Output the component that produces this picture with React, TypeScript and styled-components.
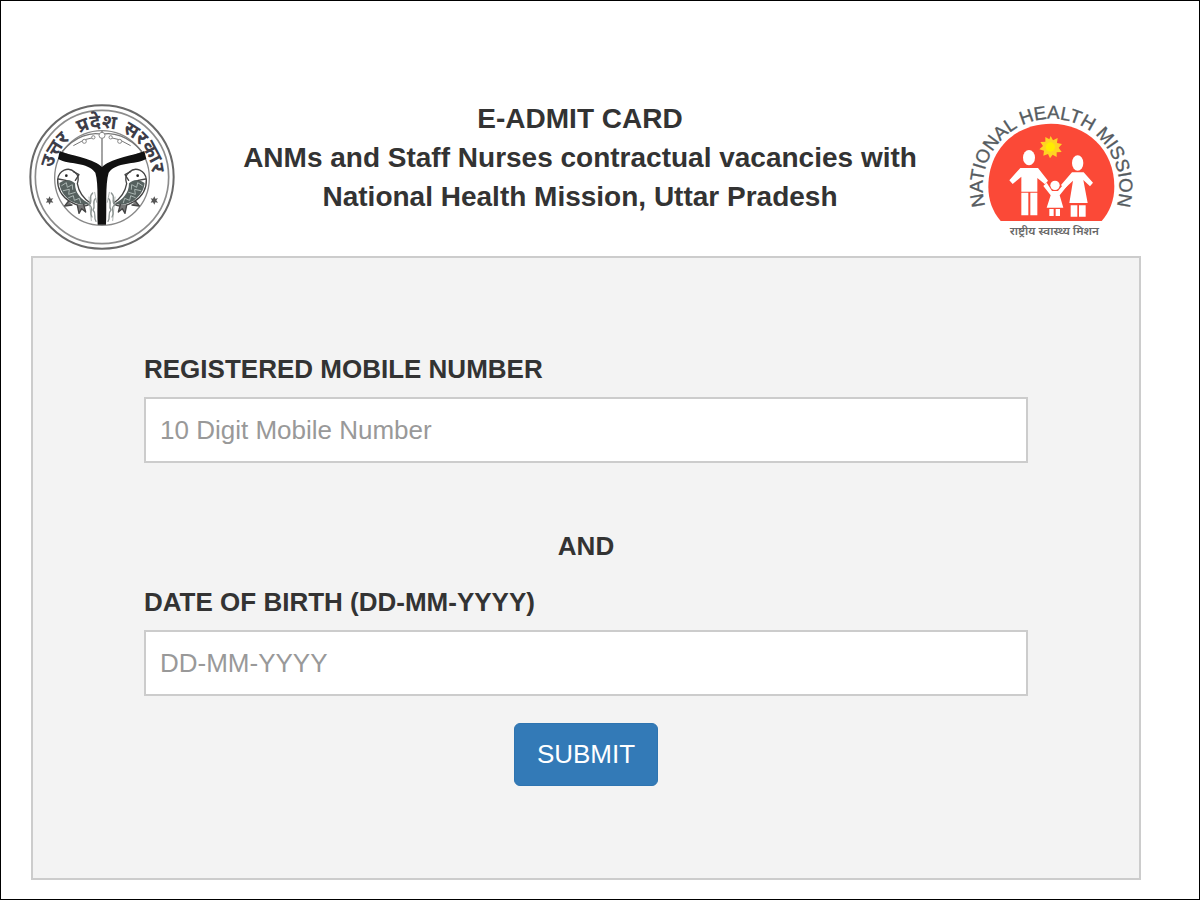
import React from "react";
import styled, { createGlobalStyle } from "styled-components";

const GlobalStyle = createGlobalStyle`
  *, *::before, *::after { box-sizing: border-box; }
  body {
    margin: 0;
    background: #fff;
    color: #333;
    font-family: "Liberation Sans", Arial, sans-serif;
  }
`;

const Page = styled.main`
  min-height: 100vh;
  padding: 98px 58px 18px 28px;
  border: 1px solid #000;
`;

const Header = styled.header`
  display: grid;
  grid-template-columns: 170px 1fr 180px;
  align-items: start;
  min-height: 157px;
`;

const Title = styled.h1`
  margin: 0;
  font-size: 28px;
  line-height: 39px;
  font-weight: 700;
  text-align: center;
`;

const TitleLine = styled.span`
  display: block;
`;

const Logo = styled.svg`
  display: block;
  margin-top: 5px;
  overflow: visible;
`;

const Panel = styled.form`
  display: flex;
  flex-direction: column;
  min-height: 624px;
  margin-left: 2px;
  padding: 91px 111px 90px;
  border: 2px solid #ccc;
  background: #f3f3f3;
`;

const Field = styled.div`
  display: flex;
  flex-direction: column;
  gap: 8px;
`;

const Label = styled.label`
  font-size: 26px;
  line-height: 40px;
  font-weight: 700;
`;

const TextInput = styled.input`
  width: 100%;
  height: 66px;
  padding: 0 14px;
  border: 2px solid #ccc;
  border-radius: 0;
  background: #fff;
  color: #555;
  font: 26px "Liberation Sans", Arial, sans-serif;

  &::placeholder {
    color: #999;
    opacity: 1;
  }
`;

const Conjunction = styled.p`
  margin: 63px 0 16px;
  font-size: 26px;
  line-height: 40px;
  font-weight: 700;
  text-align: center;
`;

const SubmitButton = styled.button`
  align-self: center;
  height: 63px;
  margin-top: 27px;
  padding: 0 22px;
  border: 1px solid #2e74b0;
  border-radius: 6px;
  background: #337ab7;
  color: #fff;
  font: 26px "Liberation Sans", Arial, sans-serif;
  cursor: pointer;
`;

const devanagari = '"Noto Sans Devanagari", "Lohit Devanagari", FreeSans, "Noto Sans", sans-serif';

function Fish() {
  return (
    <g strokeLinejoin="round" strokeLinecap="round">
      <path d="M113 252 C116 224 145 212 164 229 C178 240 176 253 172 264 C177 293 190 308 211 322 C198 337 173 332 150 318 C124 301 112 277 113 252Z" fill="#fff" stroke="#444" strokeWidth="4" />
      <path d="M118 262 C137 248 153 251 165 263 C165 294 184 311 207 323 C190 333 168 324 151 315 C131 301 120 282 118 262Z" fill="#56615f" />
      <path d="M125 270 l14-9 l3 14 l15-8 l1 14 M130 285 l18-4 l-2 15 l20-6 M146 306 l14-6 l3 14 l15-6 l4 13" fill="none" stroke="#aab5b2" strokeWidth="3" />
      <circle cx="139" cy="240" r="4" fill="#222" />
      <path d="M160 228 l17 9 l-11 17 M115 250 l23 4" fill="none" stroke="#444" strokeWidth="4" />
      <path d="M146 316 l-12 15 l22-3 M172 329 l5 24 l8-14 l12 10 l-6-23" fill="#777" stroke="#444" strokeWidth="4" />
    </g>
  );
}

function Reeds() {
  return (
    <g fill="none" stroke="#8a9290" strokeWidth="4" strokeLinecap="round">
      <path d="M218 292 C202 307 222 313 207 328 C225 337 205 347 216 364" />
      <path d="M226 309 C214 322 229 331 219 343 C231 354 219 365 228 377" />
      <path d="M207 304 L214 375 M224 290 L230 320" strokeWidth="2" />
    </g>
  );
}

function StateEmblem() {
  return (
    <Logo width="146" height="146" viewBox="27 25 438 438" role="img" aria-label="उत्तर प्रदेश सरकार">
      <defs>
        <path id="emblem-arc" d="M96 247 A150 150 0 0 1 396 247" />
      </defs>
      <circle cx="246" cy="244" r="215" fill="#fff" stroke="#686868" strokeWidth="6" />
      <circle cx="246" cy="244" r="200" fill="none" stroke="#8c8c8c" strokeWidth="5" />
      <circle cx="246" cy="247" r="142" fill="#fff" stroke="#888" strokeWidth="4" />
      <text fontFamily={devanagari} fontSize="58" fontWeight="700" fill="#3d3d48" textAnchor="middle">
        <textPath href="#emblem-arc" startOffset="17%">उत्तर</textPath>
      </text>
      <text fontFamily={devanagari} fontSize="58" fontWeight="700" fill="#3d3d48" textAnchor="middle">
        <textPath href="#emblem-arc" startOffset="47%">प्रदेश</textPath>
      </text>
      <text fontFamily={devanagari} fontSize="58" fontWeight="700" fill="#3d3d48" textAnchor="middle">
        <textPath href="#emblem-arc" startOffset="80%">सरकार</textPath>
      </text>
      <g fill="none" stroke="#777" strokeWidth="4">
        <path d="M126 168 C166 121 213 108 246 116 C279 108 326 121 366 168" />
        <path d="M128 172 L238 210 M364 172 L254 210 M246 106 V212" />
        <path d="M160 150 L194 132 L220 126 M332 150 L298 132 L272 126" strokeWidth="3" />
      </g>
      <g fill="#fff" stroke="#888" strokeWidth="3">
        <circle cx="246" cy="119" r="9" />
        <circle cx="220" cy="125" r="5" />
        <circle cx="272" cy="125" r="5" />
        <circle cx="193" cy="137" r="6" />
        <circle cx="299" cy="137" r="6" />
      </g>
      <Fish />
      <g transform="translate(492 0) scale(-1 1)"><Fish /></g>
      <Reeds />
      <g transform="translate(492 0) scale(-1 1)"><Reeds /></g>
      <path d="M119 166 C153 181 207 183 246 213 C285 183 339 181 373 166 L379 190 C342 209 291 197 266 231 C255 267 261 333 258 387 L233 387 C230 333 237 267 226 231 C201 197 150 209 114 190Z" fill="#111" />
      <g fill="#555">
        <path d="M89 302 l3 7 8-1 -5 6 5 7 -8-1 -3 7 -4-7 -7 1 4-7 -4-6 7 1Z" />
        <path d="M403 302 l3 7 8-1 -5 6 5 7 -8-1 -3 7 -4-7 -7 1 4-7 -4-6 7 1Z" />
      </g>
    </Logo>
  );
}

function HealthMissionLogo() {
  return (
    <Logo width="180" height="143" viewBox="0 27 540 429" role="img" aria-label="National Health Mission">
      <defs>
        <path id="mission-arc" d="M92 378 A205 205 0 1 1 448 378" />
      </defs>
      <text fontFamily="Liberation Sans, Arial, sans-serif" fontSize="56" fill="#555b60" stroke="#555b60" strokeWidth="1" textAnchor="middle">
        <textPath href="#mission-arc" startOffset="50%">NATIONAL HEALTH MISSION</textPath>
      </text>
      <path d="M119 378 C94 348 82 315 82 275 C82 164 163 86 270 86 C378 86 460 164 460 275 C460 315 446 351 422 378Z" fill="#fb4937" />
      <path d="M269 123 l7 13 14-7 -2 15 15 3 -10 11 9 13 -15 1 0 14 -12-7 -8 11 -6-13 -14 5 2-15 -14-4 11-10 -8-12 15-1 0-14 12 7Z" fill="#ffd323" />
      <circle cx="268" cy="156" r="14" fill="#ffed00" />
      <g fill="#fff">
        <ellipse cx="204" cy="188" rx="18" ry="23" />
        <path d="M178 219 H231 L261 257 L252 268 L229 249 V290 H181 V245 L155 267 L145 256Z" />
        <path d="M181 293 H202 V361 H181Z M208 293 H229 V361 H208Z" />
        <ellipse cx="350" cy="204" rx="17" ry="23" />
        <path d="M333 232 H368 L396 263 L387 274 L367 255 L380 324 H325 L336 257 L310 281 L300 270Z" />
        <path d="M329 331 H349 V365 H329Z M354 331 H374 V365 H354Z" />
        <circle cx="282" cy="271" r="14" />
        <path d="M257 263 L273 288 H291 L311 263 L320 271 L296 301 L307 338 H257 L269 301 L247 273Z" />
        <path d="M265 342 H278 V363 H265Z M284 342 H297 V363 H284Z" />
      </g>
      <text x="280" y="421" fontFamily={devanagari} fontSize="35" fontWeight="600" fill="#686868" textAnchor="middle">राष्ट्रीय स्वास्थ्य मिशन</text>
    </Logo>
  );
}

export default function App() {
  return (
    <>
      <GlobalStyle />
      <Page>
        <Header>
          <StateEmblem />
          <Title>
            <TitleLine>E-ADMIT CARD</TitleLine>
            <TitleLine>ANMs and Staff Nurses contractual vacancies with</TitleLine>
            <TitleLine>National Health Mission, Uttar Pradesh</TitleLine>
          </Title>
          <HealthMissionLogo />
        </Header>
        <Panel onSubmit={(event) => event.preventDefault()}>
          <Field>
            <Label htmlFor="mobile">REGISTERED MOBILE NUMBER</Label>
            <TextInput id="mobile" type="tel" placeholder="10 Digit Mobile Number" />
          </Field>
          <Conjunction>AND</Conjunction>
          <Field>
            <Label htmlFor="dob">DATE OF BIRTH (DD-MM-YYYY)</Label>
            <TextInput id="dob" type="text" placeholder="DD-MM-YYYY" />
          </Field>
          <SubmitButton type="submit">SUBMIT</SubmitButton>
        </Panel>
      </Page>
    </>
  );
}
